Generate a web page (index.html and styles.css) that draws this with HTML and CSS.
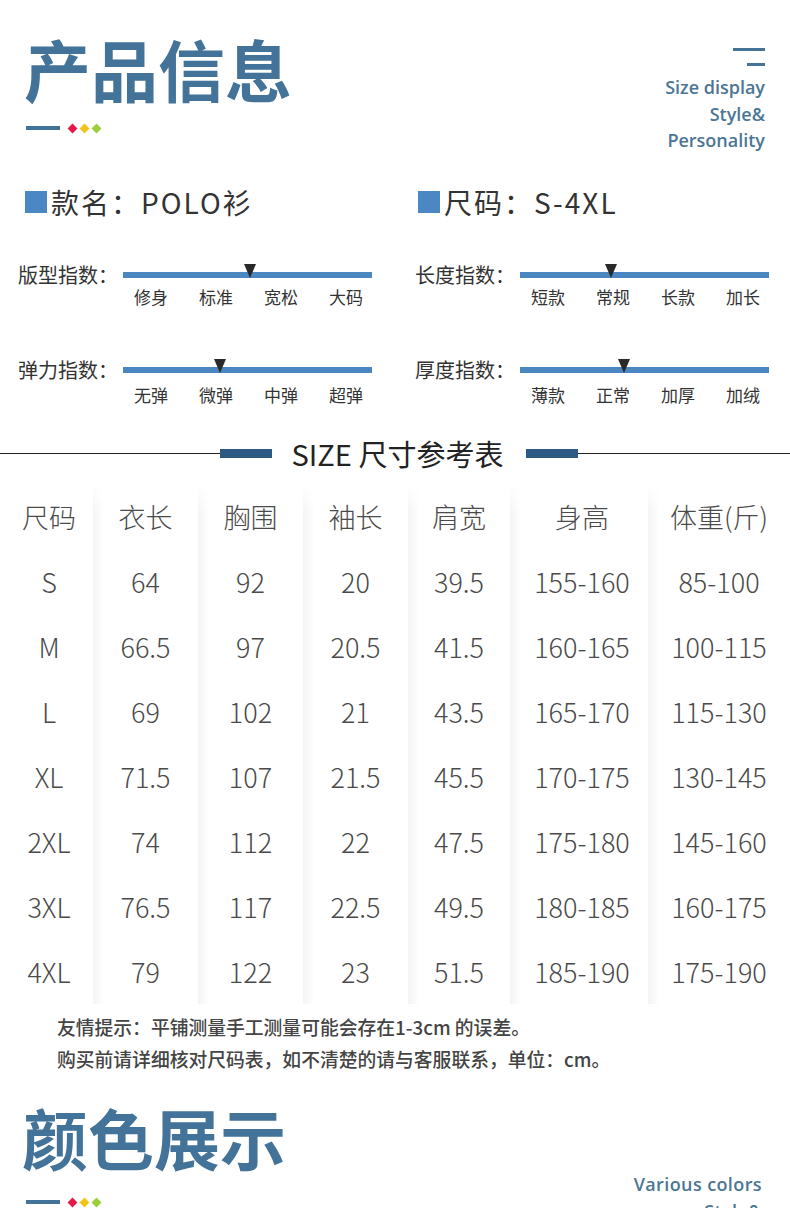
FILE: index.html
```html
<!DOCTYPE html>
<html lang="zh-CN">
<head>
<meta charset="utf-8">
<title>产品信息</title>
<link rel="stylesheet" href="styles.css">
</head>
<body>
<div class="page">
  <header class="hero">
    <div class="hero-left">
      <h1 class="hero-title">产品信息</h1>
      <div class="deco"><span class="deco-line"></span><span class="dot red"></span><span class="dot yellow"></span><span class="dot green"></span></div>
    </div>
    <div class="hero-right">
      <span class="rl rl-long"></span>
      <span class="rl rl-short"></span>
      <p class="en">Size display<br>Style&amp;<br>Personality</p>
    </div>
  </header>

  <section class="info">
    <div class="info-item"><span class="sq"></span>款名：POLO衫</div>
    <div class="info-item"><span class="sq"></span>尺码：S-4XL</div>
  </section>

  <section class="scales">
    <div class="scale">
      <div class="scale-top"><span class="scale-label">版型指数：</span><div class="bar"><span class="marker" style="left:126.5px"></span></div></div>
      <div class="ticks"><span>修身</span><span>标准</span><span>宽松</span><span>大码</span></div>
    </div>
    <div class="scale">
      <div class="scale-top"><span class="scale-label">长度指数：</span><div class="bar"><span class="marker" style="left:90.5px"></span></div></div>
      <div class="ticks"><span>短款</span><span>常规</span><span>长款</span><span>加长</span></div>
    </div>
    <div class="scale scale--lower">
      <div class="scale-top"><span class="scale-label">弹力指数：</span><div class="bar"><span class="marker" style="left:97px"></span></div></div>
      <div class="ticks"><span>无弹</span><span>微弹</span><span>中弹</span><span>超弹</span></div>
    </div>
    <div class="scale scale--lower">
      <div class="scale-top"><span class="scale-label">厚度指数：</span><div class="bar"><span class="marker" style="left:104px"></span></div></div>
      <div class="ticks"><span>薄款</span><span>正常</span><span>加厚</span><span>加绒</span></div>
    </div>
  </section>

  <div class="size-head">
    <span class="sh-line sh-line--left"></span><span class="sh-bar"></span>
    <span class="sh-text">SIZE 尺寸参考表</span>
    <span class="sh-bar"></span><span class="sh-line"></span>
  </div>

  <table class="size-table">
    <colgroup>
      <col class="c1"><col class="c2"><col class="c3"><col class="c4"><col class="c5"><col class="c6"><col class="c7">
    </colgroup>
    <thead>
      <tr><th>尺码</th><th>衣长</th><th>胸围</th><th>袖长</th><th>肩宽</th><th>身高</th><th>体重(斤)</th></tr>
    </thead>
    <tbody>
      <tr><td>S</td><td>64</td><td>92</td><td>20</td><td>39.5</td><td>155-160</td><td>85-100</td></tr>
      <tr><td>M</td><td>66.5</td><td>97</td><td>20.5</td><td>41.5</td><td>160-165</td><td>100-115</td></tr>
      <tr><td>L</td><td>69</td><td>102</td><td>21</td><td>43.5</td><td>165-170</td><td>115-130</td></tr>
      <tr><td>XL</td><td>71.5</td><td>107</td><td>21.5</td><td>45.5</td><td>170-175</td><td>130-145</td></tr>
      <tr><td>2XL</td><td>74</td><td>112</td><td>22</td><td>47.5</td><td>175-180</td><td>145-160</td></tr>
      <tr><td>3XL</td><td>76.5</td><td>117</td><td>22.5</td><td>49.5</td><td>180-185</td><td>160-175</td></tr>
      <tr><td>4XL</td><td>79</td><td>122</td><td>23</td><td>51.5</td><td>185-190</td><td>175-190</td></tr>
    </tbody>
  </table>

  <div class="note">
    <p>友情提示：平铺测量手工测量可能会存在1-3cm 的误差。</p>
    <p>购买前请详细核对尺码表，如不清楚的请与客服联系，单位：cm。</p>
  </div>

  <header class="hero hero--colors">
    <div class="hero-left">
      <h2 class="hero-title">颜色展示</h2>
      <div class="deco"><span class="deco-line"></span><span class="dot red"></span><span class="dot yellow"></span><span class="dot green"></span></div>
    </div>
    <div class="hero-right">
      <span class="rl rl-long"></span>
      <span class="rl rl-short"></span>
      <p class="en">Various colors<br>Style&amp;</p>
    </div>
  </header>
</div>
</body>
</html>
```
FILE: styles.css
```css
* { box-sizing: border-box; margin: 0; padding: 0; }
html, body { background: #fff; }
body {
  width: 790px;
  height: 1208px;
  overflow: hidden;
  font-family: "Noto Sans CJK SC", "Noto Sans", sans-serif;
  color: #333;
}
.page { width: 790px; }

/* hero */
.hero {
  display: flex;
  justify-content: space-between;
  height: 165px;
  padding: 34px 25px 0 24px;
}
.hero-title {
  font-size: 67px;
  line-height: 67px;
  font-weight: 700;
  color: #44739a;
}
.deco {
  display: flex;
  align-items: center;
  height: 10px;
  margin-top: 22px;
}
.deco-line {
  width: 34px;
  height: 4px;
  background: #44739a;
  margin-left: 2px;
  margin-right: 9px;
}
.dot {
  width: 7px;
  height: 7px;
  transform: rotate(45deg);
  margin-right: 5px;
}
.red { background: #e31a48; }
.yellow { background: #f2c41a; }
.green { background: #9bd03a; }

.hero-right {
  display: flex;
  flex-direction: column;
  align-items: flex-end;
  padding-top: 14px;
}
.rl { display: block; height: 3px; background: #44739a; }
.rl-long { width: 32px; }
.rl-short { width: 18px; margin-top: 12px; }
.en {
  margin-top: 8px;
  font-family: "Open Sans", "Liberation Sans", sans-serif;
  font-weight: 600;
  font-size: 18px;
  line-height: 26.5px;
  color: #4b7695;
  text-align: right;
}

.hero--colors {
  height: 105px;
  padding: 0 28px 0 22px;
  margin-top: 28px;
}
.hero--colors .hero-title { font-size: 66px; }
.hero--colors .deco { margin-top: 27px; }
.hero--colors .deco-line { margin-left: 4px; }
.hero--colors .hero-right { padding-top: 31px; }
.hero--colors .rl-long { width: 33px; }
.hero--colors .rl-short { width: 17px; margin-top: 11px; }
.hero--colors .en { margin-top: 26px; letter-spacing: 0.4px; }

/* info */
.info {
  display: grid;
  grid-template-columns: 393px 1fr;
  padding-left: 25px;
  margin-top: 17px;
  height: 40px;
}
.info-item {
  display: flex;
  align-items: center;
  font-size: 28px;
  line-height: 40px;
  letter-spacing: 2px;
  color: #333;
}
.sq {
  width: 22px;
  height: 22px;
  background: #4a87c3;
  margin-right: 4px;
}

/* scales */
.scales {
  display: grid;
  grid-template-columns: 397px 1fr;
  padding-left: 18px;
  margin-top: 43px;
  row-gap: 54px;
}
.scale-top {
  display: flex;
  align-items: center;
  height: 20px;
}
.scale-label {
  width: 105px;
  font-size: 20px;
  line-height: 20px;
  color: #333;
  white-space: nowrap;
}
.bar {
  position: relative;
  width: 249px;
  height: 6px;
  background: #4a86c0;
}
.marker {
  position: absolute;
  top: -8px;
  width: 0;
  height: 0;
  border-left: 6.5px solid transparent;
  border-right: 6.5px solid transparent;
  border-top: 14px solid #2a2a2a;
  transform: translateX(-50%);
}
.ticks {
  display: flex;
  gap: 31px;
  padding-left: 116px;
  margin-top: 3px;
  font-size: 17px;
  line-height: 18px;
  color: #333;
}
.scale--lower .ticks { margin-top: 6px; }

/* size header */
.size-head {
  display: flex;
  align-items: center;
  height: 30px;
  margin-top: 34px;
}
.sh-line { flex: 1 1 0; height: 1px; background: #222; }
.sh-line--left { flex: 1 0 8px; }
.sh-bar { width: 52px; height: 9px; background: #2d5a82; }
.sh-text {
  font-size: 29px;
  line-height: 30px;
  padding: 0 23px 0 20px;
  color: #222;
  white-space: nowrap;
}

/* table */
.size-table {
  width: 790px;
  border-collapse: collapse;
  table-layout: fixed;
  margin-top: 16px;
}
.c1 { width: 93px; }
.c2, .c3, .c4 { width: 105px; }
.c5 { width: 102px; }
.c6 { width: 138px; }
.c7 { width: 142px; }
.size-table th,
.size-table td {
  height: 65px;
  padding: 0;
  text-align: center;
  font-size: 27px;
  font-weight: 300;
  color: #4a4a4a;
  white-space: nowrap;
}
.size-table td + td {
  background: linear-gradient(90deg, rgba(0, 0, 0, 0.045) 0, rgba(0, 0, 0, 0) 12px);
}
.size-table th + th {
  background:
    linear-gradient(180deg, #fff 0, rgba(255, 255, 255, 0) 30px),
    linear-gradient(90deg, rgba(0, 0, 0, 0.045) 0, rgba(0, 0, 0, 0) 12px);
}
.size-table th:first-child,
.size-table td:first-child { padding-left: 5px; }
.size-table th:nth-child(6),
.size-table td:nth-child(6) { padding-left: 6px; }

/* note */
.note {
  padding-left: 57px;
  margin-top: 7px;
  font-size: 18.8px;
  line-height: 32px;
  font-weight: 500;
  color: #444;
}
```
